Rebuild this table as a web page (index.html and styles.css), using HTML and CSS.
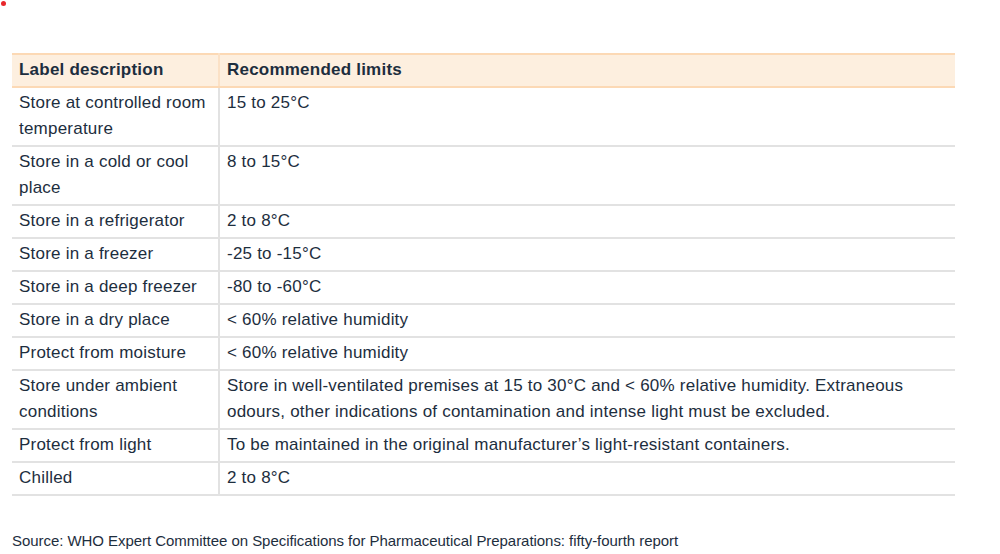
FILE: index.html
```html
<!DOCTYPE html>
<html>
<head>
<meta charset="utf-8">
<link rel="stylesheet" href="styles.css">
</head>
<body>
<span class="dot"></span>
<div class="page">
<table class="limits">
<thead>
<tr><th class="c1">Label description</th><th>Recommended limits</th></tr>
</thead>
<tbody>
<tr><td class="c1">Store at controlled room temperature</td><td>15 to 25°C</td></tr>
<tr><td class="c1">Store in a cold or cool place</td><td>8 to 15°C</td></tr>
<tr><td class="c1">Store in a refrigerator</td><td>2 to 8°C</td></tr>
<tr><td class="c1">Store in a freezer</td><td>-25 to -15°C</td></tr>
<tr><td class="c1">Store in a deep freezer</td><td>-80 to -60°C</td></tr>
<tr><td class="c1">Store in a dry place</td><td>&lt; 60% relative humidity</td></tr>
<tr><td class="c1">Protect from moisture</td><td>&lt; 60% relative humidity</td></tr>
<tr><td class="c1">Store under ambient conditions</td><td>Store in well-ventilated premises at 15 to 30°C and &lt; 60% relative humidity. Extraneous odours, other indications of contamination and intense light must be excluded.</td></tr>
<tr><td class="c1">Protect from light</td><td>To be maintained in the original manufacturer’s light-resistant containers.</td></tr>
<tr><td class="c1">Chilled</td><td>2 to 8°C</td></tr>
</tbody>
</table>
<p class="source">Source: WHO Expert Committee on Specifications for Pharmaceutical Preparations: fifty-fourth report</p>
</div>
</body>
</html>
```
FILE: styles.css
```css
html, body {
  margin: 0;
  padding: 0;
  background: #fff;
}
body {
  font-family: "Liberation Sans", Arial, sans-serif;
  color: #1d2e3e;
}
.dot {
  position: absolute;
  left: 1px;
  top: 1px;
  width: 5px;
  height: 5px;
  border-radius: 50%;
  background: #e8272b;
}
.page {
  padding: 53px 45px 0 12px;
}
.limits {
  width: 943px;
  border-collapse: collapse;
  font-size: 17px;
  line-height: 26px;
  letter-spacing: 0.22px;
}
.limits th {
  background: #fdefdf;
  border-top: 2px solid #fcd9b5;
  border-bottom: 2px solid #fcd9b5;
  text-align: left;
  font-weight: bold;
  padding: 2px 7px 3px 7px;
  vertical-align: top;
}
.limits th.c1 {
  border-right: 2px solid #fbe1c6;
}
.limits td {
  border-bottom: 2px solid #e2e2e2;
  padding: 2px 7px 3px 7px;
  vertical-align: top;
}
.limits td.c1 {
  width: 192px;
  border-right: 2px solid #e2e2e2;
}
.source {
  margin: 35px 0 0 0;
  font-size: 15px;
  line-height: 20px;
  letter-spacing: -0.05px;
}
```
